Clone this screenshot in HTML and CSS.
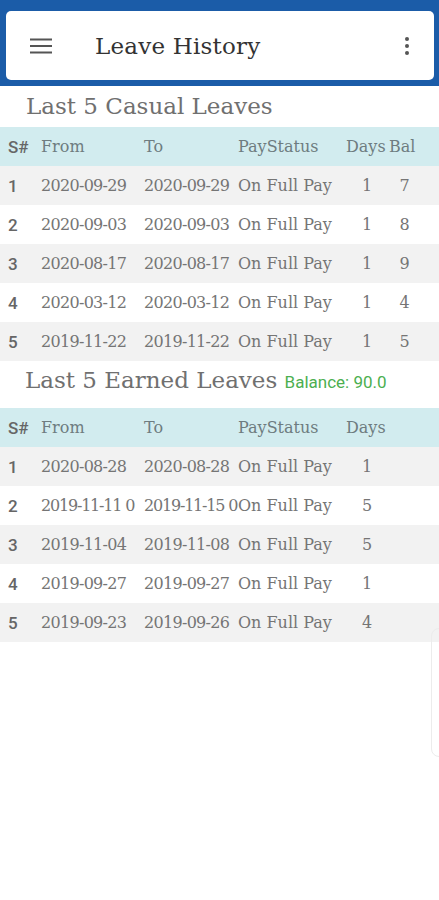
FILE: index.html
```html
<!DOCTYPE html>
<html>
<head>
<meta charset="utf-8">
<link rel="stylesheet" href="styles.css">
</head>
<body>
<header class="appbar">
  <div class="card">
    <svg class="menu" width="24" height="24" viewBox="0 0 24 24"><path d="M1 5.5h22M1 12h22M1 18.5h22" stroke="#555" stroke-width="2"/></svg>
    <h1 class="title">Leave History</h1>
    <svg class="more" width="6" height="20" viewBox="0 0 6 20"><circle cx="3" cy="3" r="2" fill="#555"/><circle cx="3" cy="10" r="2" fill="#555"/><circle cx="3" cy="17" r="2" fill="#555"/></svg>
  </div>
</header>
<main>
  <h2 class="section">Last 5 Casual Leaves</h2>
  <div class="table">
    <div class="row head"><span class="sn">S#</span><span>From</span><span>To</span><span>PayStatus</span><span>Days</span><span>Bal</span></div>
    <div class="row odd"><span class="sn">1</span><span class="date">2020-09-29</span><span class="date">2020-09-29</span><span>On Full Pay</span><span class="num">1</span><span class="num">7</span></div>
    <div class="row"><span class="sn">2</span><span class="date">2020-09-03</span><span class="date">2020-09-03</span><span>On Full Pay</span><span class="num">1</span><span class="num">8</span></div>
    <div class="row odd"><span class="sn">3</span><span class="date">2020-08-17</span><span class="date">2020-08-17</span><span>On Full Pay</span><span class="num">1</span><span class="num">9</span></div>
    <div class="row"><span class="sn">4</span><span class="date">2020-03-12</span><span class="date">2020-03-12</span><span>On Full Pay</span><span class="num">1</span><span class="num">4</span></div>
    <div class="row odd"><span class="sn">5</span><span class="date">2019-11-22</span><span class="date">2019-11-22</span><span>On Full Pay</span><span class="num">1</span><span class="num">5</span></div>
  </div>
  <h2 class="section earned">Last 5 Earned Leaves <span class="balance">Balance: 90.0</span></h2>
  <div class="table">
    <div class="row head"><span class="sn">S#</span><span>From</span><span>To</span><span>PayStatus</span><span>Days</span><span></span></div>
    <div class="row odd"><span class="sn">1</span><span class="date">2020-08-28</span><span class="date">2020-08-28</span><span>On Full Pay</span><span class="num">1</span><span></span></div>
    <div class="row"><span class="sn">2</span><span class="date long">2019-11-11 0</span><span class="date long">2019-11-15 0</span><span>On Full Pay</span><span class="num">5</span><span></span></div>
    <div class="row odd"><span class="sn">3</span><span class="date">2019-11-04</span><span class="date">2019-11-08</span><span>On Full Pay</span><span class="num">5</span><span></span></div>
    <div class="row"><span class="sn">4</span><span class="date">2019-09-27</span><span class="date">2019-09-27</span><span>On Full Pay</span><span class="num">1</span><span></span></div>
    <div class="row odd"><span class="sn">5</span><span class="date">2019-09-23</span><span class="date">2019-09-26</span><span>On Full Pay</span><span class="num">4</span><span></span></div>
  </div>
</main>
<div class="edge"></div>
</body>
</html>
```
FILE: styles.css
```css
html, body {
  margin: 0;
  padding: 0;
  background: #ffffff;
}
body {
  font-family: "DejaVu Serif", "Liberation Serif", serif;
  color: #757575;
  position: relative;
  min-height: 900px;
  overflow: hidden;
}
.appbar {
  background: #1b5ca8;
  padding: 11px 5px 6px 6px;
}
.card {
  background: #ffffff;
  border-radius: 5px;
  height: 69px;
  display: flex;
  align-items: center;
  padding: 0 24px 0 23px;
}
.menu { flex: none; }
.title {
  margin: 0 0 0 42px;
  flex: 1;
  font-size: 23px;
  font-weight: normal;
  color: #333;
  letter-spacing: 0.2px;
}
.more { flex: none; }
.section {
  margin: 0;
  padding: 3px 0 0 26px;
  height: 38px;
  line-height: 34px;
  font-size: 23px;
  font-weight: normal;
  color: #707070;
}
.section.earned {
  height: 45px;
  line-height: 34px;
  padding-top: 2px;
  padding-left: 25px;
}
.balance {
  font-family: Roboto, "Noto Sans", sans-serif;
  font-size: 17px;
  color: #4caf50;
}
.table {
  display: flex;
  flex-direction: column;
}
.row {
  display: grid;
  grid-template-columns: 32px 103px 94px 108px 43px 32px 1fr;
  align-items: center;
  height: 39px;
  padding-left: 8px;
  font-size: 16px;
  white-space: nowrap;
}
.row.head {
  background: #d2ecef;
  color: #6e7c80;
}
.row.odd { background: #f2f2f2; }
.sn {
  font-family: Roboto, "Noto Sans", sans-serif;
  font-weight: 500;
  font-size: 17px;
  color: #666;
}
.row span:not(.sn) { padding-left: 1px; }
.date { letter-spacing: -0.7px; }
.date.long { letter-spacing: -1.2px; }
.num { text-align: center; }
.edge {
  position: absolute;
  left: 431px;
  top: 628px;
  width: 20px;
  height: 127px;
  border: 1px solid #ececec;
  border-radius: 8px;
}
```
